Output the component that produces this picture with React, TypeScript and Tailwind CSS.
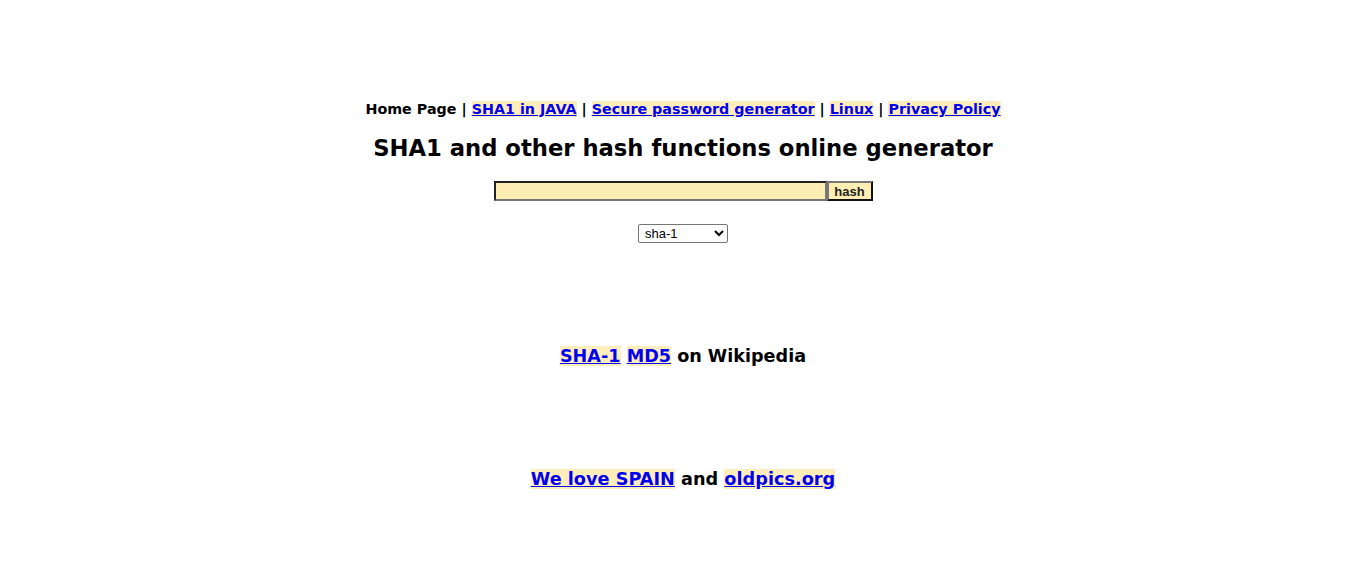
import { useState } from 'react';

const link = 'text-[#0000ee] underline bg-[#ffeebb]';

export default function App() {
    const [text, setText] = useState('');
    const [algo, setAlgo] = useState('sha-1');

    return (
        <div className="min-h-[574px] bg-white text-black text-center font-['DejaVu_Sans',sans-serif] font-bold">
            <div className="pt-[100px] text-[14.3px] leading-[18px]">
                Home Page | <a href="#" className={link}>SHA1 in JAVA</a> | <a href="#" className={link}>Secure password generator</a> | <a href="#" className={link}>Linux</a> | <a href="#" className={link}>Privacy Policy</a>
            </div>
            <h1 className="mt-[16px] text-[22.7px] leading-[28px]">SHA1 and other hash functions online generator</h1>

            <form className="mt-[19px] flex justify-center" onSubmit={e => e.preventDefault()}>
                <input
                    value={text}
                    onChange={e => setText(e.target.value)}
                    className="w-[333px] h-[20px] bg-[#ffeeb4] border-2 border-t-[#222] border-l-[#222] border-b-[#777] border-r-[#777] outline-none px-1 text-[13px] font-normal"
                />
                <button type="submit" className="w-[46px] h-[20px] bg-[#ffeeb4] border-2 border-t-[#777] border-l-[#777] border-b-[#111] border-r-[#111] text-[13px] leading-none font-['Liberation_Sans',sans-serif] font-bold text-[#222]">
                    hash
                </button>
            </form>

            <div className="mt-[23px] flex justify-center">
                <select
                    value={algo}
                    onChange={e => setAlgo(e.target.value)}
                    className="w-[90px] h-[19px] border border-[#767676] rounded-[2px] bg-white text-[13px] font-normal font-['Liberation_Sans',sans-serif] pl-[2px]"
                >
                    <option>sha-1</option>
                    <option>md5</option>
                    <option>sha-256</option>
                </select>
            </div>

            <div className="mt-[101px] text-[17.6px] leading-[24px]">
                <a href="#" className={link}>SHA-1</a> <a href="#" className={link}>MD5</a> on Wikipedia
            </div>

            <div className="mt-[99px] text-[17.7px] leading-[24px]">
                <a href="#" className={link}>We love SPAIN</a> and <a href="#" className={link}>oldpics.org</a>
            </div>
        </div>
    );
}
